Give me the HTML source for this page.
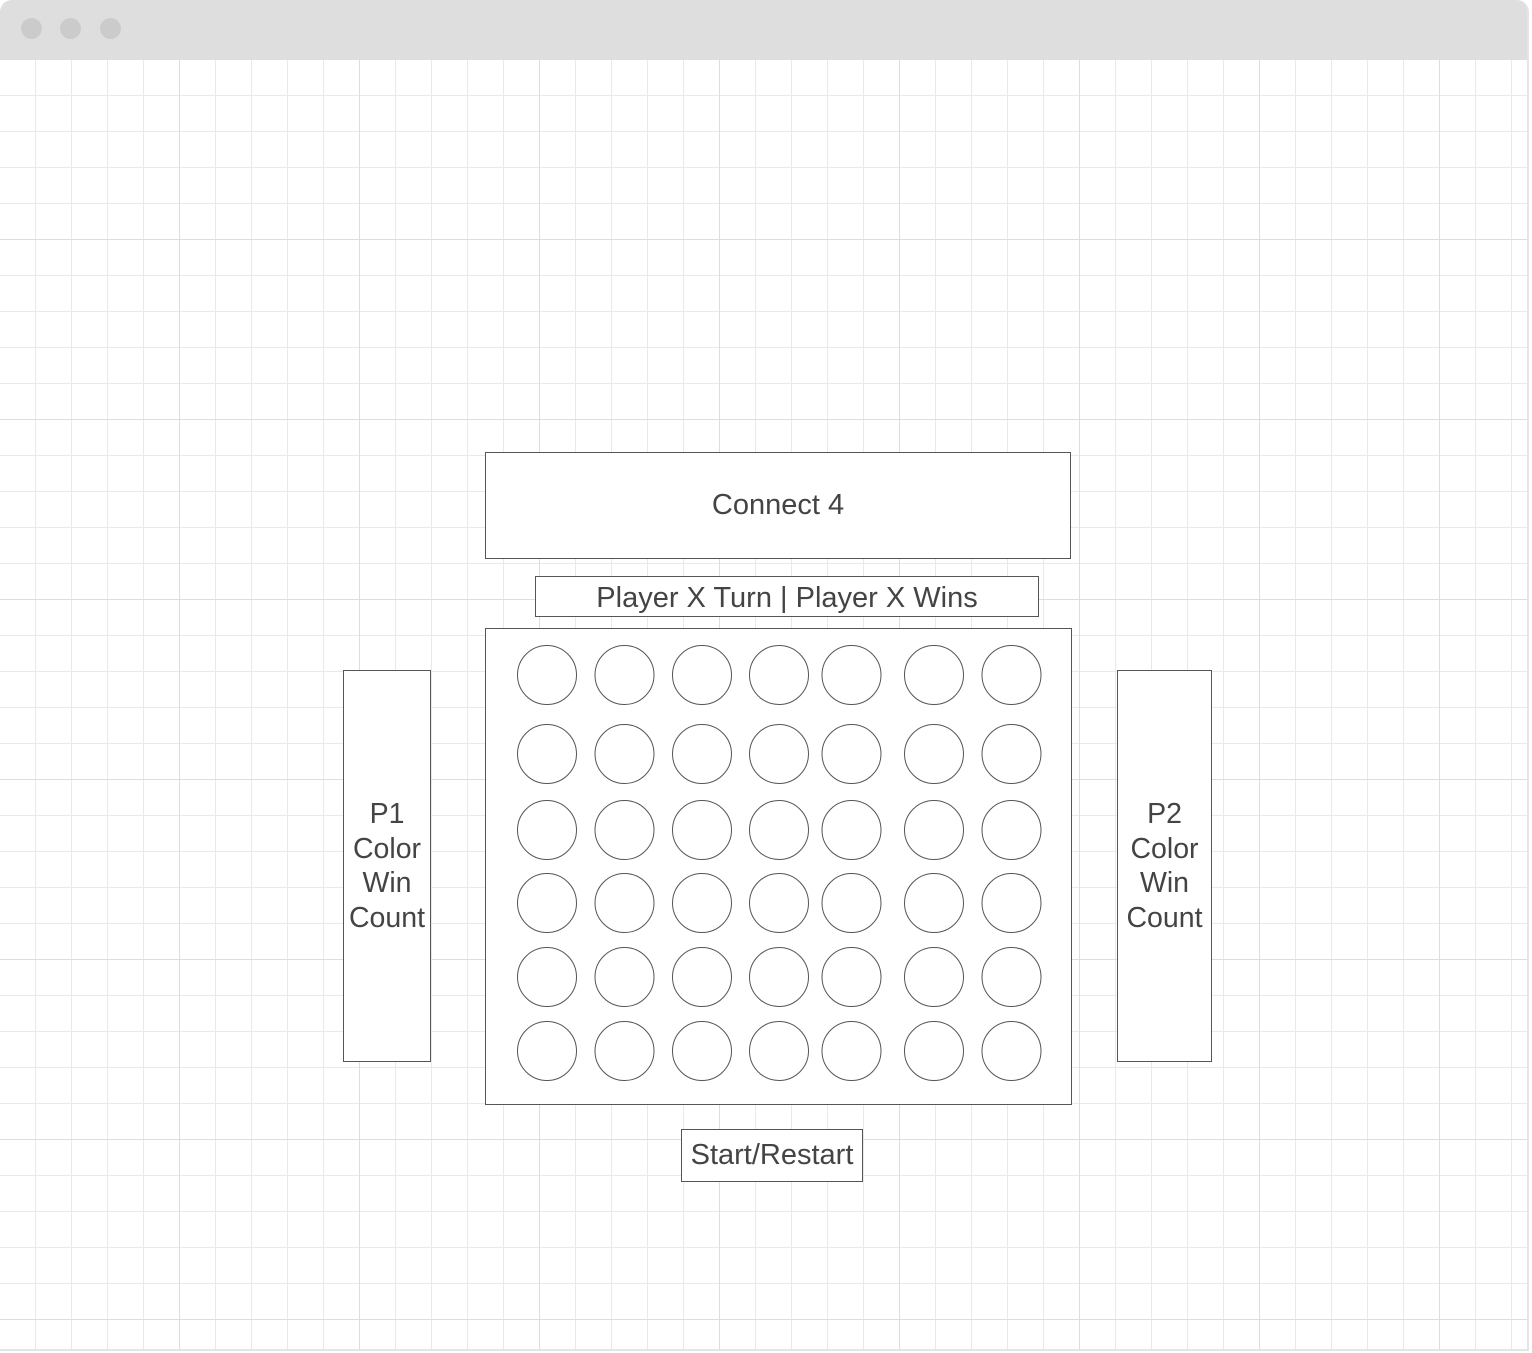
<!DOCTYPE html>
<html><head><meta charset="utf-8"><style>
html,body{margin:0;padding:0;background:#fff;}
body{width:1532px;height:1353px;position:relative;overflow:hidden;font-family:"Liberation Sans",sans-serif;color:#444;}
.win{position:absolute;left:0;top:0;width:1527px;height:1349px;border-right:2px solid #e4e4e4;border-bottom:2px solid #e4e4e4;border-radius:12px 12px 0 0;overflow:hidden;}
.bar{position:absolute;left:0;top:0;right:0;height:59px;background:#dedede;}
.dot{position:absolute;top:18px;width:21px;height:21px;border-radius:50%;background:#cbcbcb;}
.grid{position:absolute;left:0;top:59px;right:0;bottom:0;
background-image:
linear-gradient(to right,#dddddd 1px,transparent 1px),
linear-gradient(to bottom,#dddddd 1px,transparent 1px),
linear-gradient(to right,#e9e9e9 1px,transparent 1px),
linear-gradient(to bottom,#e9e9e9 1px,transparent 1px);
background-size:180px 180px,180px 180px,36px 36px,36px 36px;
background-position:179px 0,0 180px,35px 0,0 36px;}
.box{position:absolute;border:1px solid #555;background:#fff;box-sizing:border-box;display:flex;align-items:center;justify-content:center;text-align:center;}
</style></head><body>
<div class="win">
<div class="bar"><div class="dot" style="left:21px"></div><div class="dot" style="left:60px"></div><div class="dot" style="left:100px"></div></div>
<div class="grid"></div>
</div>
<div class="box" style="left:485px;top:452px;width:586px;height:107px;font-size:29px;">Connect 4</div>
<div class="box" style="left:535px;top:576px;width:504px;height:41px;font-size:29px;padding-top:3px;">Player X Turn | Player X Wins</div>
<div class="box" style="left:343px;top:670px;width:88px;height:392px;font-size:28.5px;line-height:34.5px;">P1<br>Color<br>Win<br>Count</div>
<div class="box" style="left:1117px;top:670px;width:95px;height:392px;font-size:28.5px;line-height:34.5px;">P2<br>Color<br>Win<br>Count</div>
<div class="box" style="left:681px;top:1129px;width:182px;height:53px;font-size:29px;">Start/Restart</div>
<div class="box" style="left:485px;top:628px;width:587px;height:477px;"></div>
<svg style="position:absolute;left:0;top:0" width="1532" height="1353">
<g fill="none" stroke="#555" stroke-width="1">
<circle cx="547" cy="675" r="29.5"/><circle cx="624.5" cy="675" r="29.5"/><circle cx="702" cy="675" r="29.5"/><circle cx="779" cy="675" r="29.5"/><circle cx="851.5" cy="675" r="29.5"/><circle cx="934" cy="675" r="29.5"/><circle cx="1011.5" cy="675" r="29.5"/>
<circle cx="547" cy="754" r="29.5"/><circle cx="624.5" cy="754" r="29.5"/><circle cx="702" cy="754" r="29.5"/><circle cx="779" cy="754" r="29.5"/><circle cx="851.5" cy="754" r="29.5"/><circle cx="934" cy="754" r="29.5"/><circle cx="1011.5" cy="754" r="29.5"/>
<circle cx="547" cy="830" r="29.5"/><circle cx="624.5" cy="830" r="29.5"/><circle cx="702" cy="830" r="29.5"/><circle cx="779" cy="830" r="29.5"/><circle cx="851.5" cy="830" r="29.5"/><circle cx="934" cy="830" r="29.5"/><circle cx="1011.5" cy="830" r="29.5"/>
<circle cx="547" cy="903" r="29.5"/><circle cx="624.5" cy="903" r="29.5"/><circle cx="702" cy="903" r="29.5"/><circle cx="779" cy="903" r="29.5"/><circle cx="851.5" cy="903" r="29.5"/><circle cx="934" cy="903" r="29.5"/><circle cx="1011.5" cy="903" r="29.5"/>
<circle cx="547" cy="977" r="29.5"/><circle cx="624.5" cy="977" r="29.5"/><circle cx="702" cy="977" r="29.5"/><circle cx="779" cy="977" r="29.5"/><circle cx="851.5" cy="977" r="29.5"/><circle cx="934" cy="977" r="29.5"/><circle cx="1011.5" cy="977" r="29.5"/>
<circle cx="547" cy="1051" r="29.5"/><circle cx="624.5" cy="1051" r="29.5"/><circle cx="702" cy="1051" r="29.5"/><circle cx="779" cy="1051" r="29.5"/><circle cx="851.5" cy="1051" r="29.5"/><circle cx="934" cy="1051" r="29.5"/><circle cx="1011.5" cy="1051" r="29.5"/>
</g>
</svg>
</body></html>
